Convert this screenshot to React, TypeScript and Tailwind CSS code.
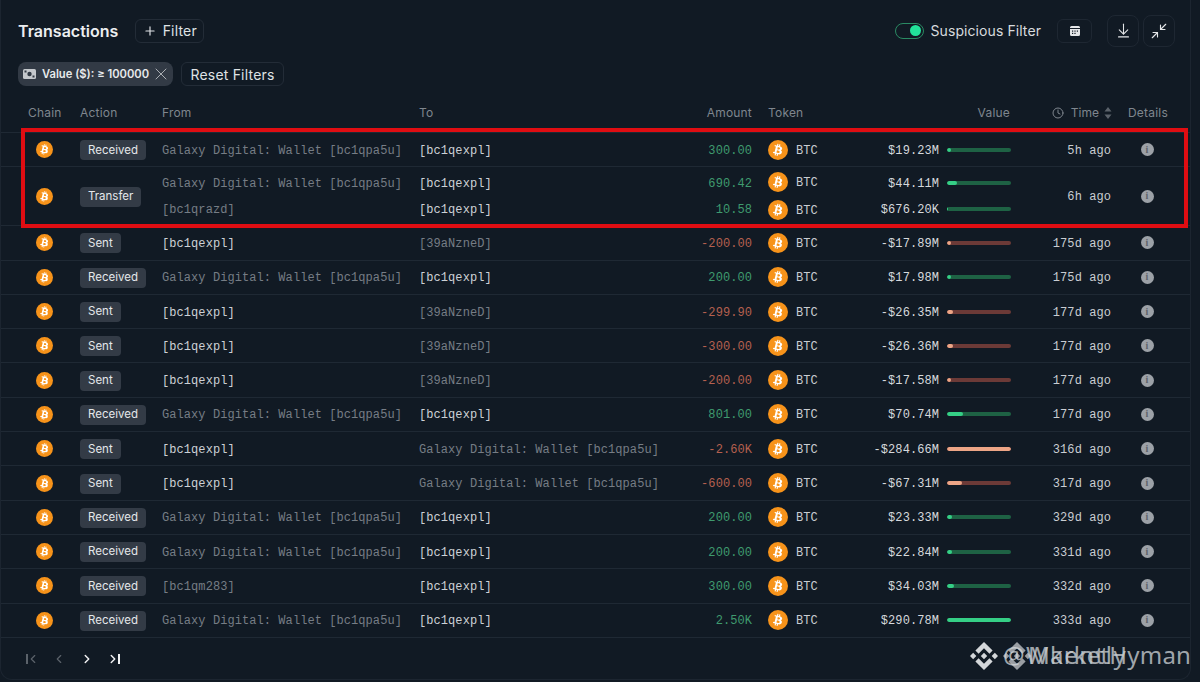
import React from 'react';
import { Plus, X, ArrowDownToLine, Minimize2, Clock, ChevronLeft, ChevronRight } from 'lucide-react';

const MONO = "font-['Liberation_Mono',monospace] tracking-[0.07px]";
const GALAXY = 'Galaxy Digital: Wallet [bc1qpa5u]';
const ME = '[bc1qexpl]';
const MAX_VALUE = 290.78;

interface Line {
  from: string;
  to: string;
  amount: string;
  value: string;
  fill: number;
}

interface Tx {
  action: string;
  time: string;
  lines: Line[];
}

const rows: Tx[] = [
  { action: 'Received', time: '5h ago', lines: [{ from: GALAXY, to: ME, amount: '300.00', value: '$19.23M', fill: 19.23 }] },
  {
    action: 'Transfer',
    time: '6h ago',
    lines: [
      { from: GALAXY, to: ME, amount: '690.42', value: '$44.11M', fill: 44.11 },
      { from: '[bc1qrazd]', to: ME, amount: '10.58', value: '$676.20K', fill: 0.68 },
    ],
  },
  { action: 'Sent', time: '175d ago', lines: [{ from: ME, to: '[39aNzneD]', amount: '-200.00', value: '-$17.89M', fill: 17.89 }] },
  { action: 'Received', time: '175d ago', lines: [{ from: GALAXY, to: ME, amount: '200.00', value: '$17.98M', fill: 17.98 }] },
  { action: 'Sent', time: '177d ago', lines: [{ from: ME, to: '[39aNzneD]', amount: '-299.90', value: '-$26.35M', fill: 26.35 }] },
  { action: 'Sent', time: '177d ago', lines: [{ from: ME, to: '[39aNzneD]', amount: '-300.00', value: '-$26.36M', fill: 26.36 }] },
  { action: 'Sent', time: '177d ago', lines: [{ from: ME, to: '[39aNzneD]', amount: '-200.00', value: '-$17.58M', fill: 17.58 }] },
  { action: 'Received', time: '177d ago', lines: [{ from: GALAXY, to: ME, amount: '801.00', value: '$70.74M', fill: 70.74 }] },
  { action: 'Sent', time: '316d ago', lines: [{ from: ME, to: GALAXY, amount: '-2.60K', value: '-$284.66M', fill: 290.78 }] },
  { action: 'Sent', time: '317d ago', lines: [{ from: ME, to: GALAXY, amount: '-600.00', value: '-$67.31M', fill: 67.31 }] },
  { action: 'Received', time: '329d ago', lines: [{ from: GALAXY, to: ME, amount: '200.00', value: '$23.33M', fill: 23.33 }] },
  { action: 'Received', time: '331d ago', lines: [{ from: GALAXY, to: ME, amount: '200.00', value: '$22.84M', fill: 22.84 }] },
  { action: 'Received', time: '332d ago', lines: [{ from: '[bc1qm283]', to: ME, amount: '300.00', value: '$34.03M', fill: 34.03 }] },
  { action: 'Received', time: '333d ago', lines: [{ from: GALAXY, to: ME, amount: '2.50K', value: '$290.78M', fill: 290.78 }] },
];

const addressColor = (addr: string) => (addr === ME ? 'text-[#cdd1d6]' : 'text-[#767d85]');

const BtcIcon = ({ size = 16 }: { size?: number }) => (
  <svg width={size} height={size} viewBox="0 0 32 32" className="shrink-0">
    <circle cx="16" cy="16" r="16" fill="#F7931A" />
    <path
      fill="#fff"
      d="M22.6 14c.3-2.1-1.3-3.2-3.4-4l.7-2.8-1.7-.4-.7 2.7-1.4-.3.7-2.7-1.7-.4-.7 2.8-1.1-.3-2.4-.6-.4 1.8s1.3.3 1.2.3c.7.2.8.6.8 1l-.8 3.1-1.1 4.4c-.1.2-.3.5-.8.4l-1.2-.3-.8 2 2.2.6 1.2.3-.7 2.8 1.7.4.7-2.8 1.4.4-.7 2.8 1.7.4.7-2.8c2.9.6 5.1.3 6-2.3.7-2.1 0-3.3-1.5-4.1 1.1-.3 1.9-1 2.2-2.5zm-3.9 5.4c-.5 2.1-4 1-5.2.7l.9-3.7c1.2.3 4.8.9 4.3 3zm.5-5.5c-.5 1.9-3.4 1-4.3.7l.8-3.3c1 .2 4 .6 3.5 2.6z"
    />
  </svg>
);

const BinanceMark = () => (
  <svg width="28" height="28" viewBox="0 0 126.61 126.61" fill="#d4d7da" className="shrink-0">
    <path d="M38.73 53.2l24.59-24.58 24.6 24.6 14.3-14.31L63.32 0 24.43 38.9zM0 63.31L14.3 49l14.31 14.31-14.31 14.3zM38.73 73.41L63.32 98l24.6-24.6 14.31 14.29-38.9 38.91-38.91-38.88zM98 63.31L112.3 49l14.31 14.3-14.31 14.32z" />
    <path d="M77.83 63.3L63.32 48.78 52.59 59.51l-1.24 1.23-2.54 2.54 14.51 14.5 14.51-14.47z" />
  </svg>
);

const ValueBar = ({ fill, negative }: { fill: number; negative: boolean }) => {
  const pct = Math.max((fill / MAX_VALUE) * 100, 2);
  return (
    <div className={`h-1 w-16 shrink-0 overflow-hidden rounded-full ${negative ? 'bg-[#6c3a37]' : 'bg-[#1e6244]'}`}>
      <div className={`h-full rounded-full ${negative ? 'bg-[#eda586]' : 'bg-[#35cf86]'}`} style={{ width: `${pct}%` }} />
    </div>
  );
};

const Row = ({ tx }: { tx: Tx }) => {
  const multi = tx.lines.length > 1;
  return (
    <div className={`flex items-center border-b border-[#1f2934] ${multi ? 'h-[59px]' : 'h-[34.3px]'}`}>
      <div className="flex w-[79px] shrink-0 pl-[35px]">
        <BtcIcon size={17} />
      </div>
      <div className="flex w-[82px] shrink-0 pt-[1px]">
        <span className="flex h-5 items-center rounded bg-[#333b46] px-2 text-[11.5px] text-[#e4e7ea]">{tx.action}</span>
      </div>
      <div className={`w-[849px] shrink-0 ${MONO} text-[12px]`}>
        {tx.lines.map((line, i) => (
          <div key={i} className={`flex items-center ${multi ? 'h-[26px]' : ''}`}>
            <div className={`w-[257px] shrink-0 whitespace-nowrap pt-[2px] ${addressColor(line.from)}`}>{line.from}</div>
            <div className={`w-[256px] shrink-0 whitespace-nowrap pt-[2px] ${addressColor(line.to)}`}>{line.to}</div>
            <div className={`w-[77px] shrink-0 pt-[2px] text-right ${line.amount.startsWith('-') ? 'text-[#b5604f]' : 'text-[#3f9a6f]'}`}>{line.amount}</div>
            <div className={`ml-4 flex w-[70px] shrink-0 items-center gap-2 text-[#c9cdd2] ${multi ? (i === 0 ? 'mb-[2px]' : 'mt-[2px]') : ''}`}>
              <BtcIcon size={20} />
              <span className="pt-[2px]">BTC</span>
            </div>
            <div className="w-[101px] shrink-0 whitespace-nowrap pt-[2px] text-right text-[#d6d9dd]">{line.value}</div>
            <div className="ml-2">
              <ValueBar fill={line.fill} negative={line.value.startsWith('-')} />
            </div>
          </div>
        ))}
      </div>
      <div className={`w-[100px] shrink-0 whitespace-nowrap pt-[2px] text-right ${MONO} text-[12px] text-[#c9cdd2]`}>{tx.time}</div>
      <div className="flex w-[72px] shrink-0 justify-center">
        <span className="flex h-[13px] w-[13px] items-center justify-center rounded-full bg-[#9ca1a7] font-['Liberation_Serif',serif] text-[10px] font-bold leading-none text-[#5f646b]">
          i
        </span>
      </div>
    </div>
  );
};

export default function App() {
  return (
    <div className="relative h-[682px] w-[1200px] overflow-hidden bg-[#111a24] font-['Inter',sans-serif]">
      <div className="h-[680px] w-[1191px] rounded-b-xl border border-t-0 border-[#1c2530]">
        {/* toolbar */}
        <div className="flex h-[60px] items-center pl-[17px] pr-[15px] pt-[1px]">
          <h1 className="text-[16px] font-semibold text-[#eceef0]">Transactions</h1>
          <button className="ml-[17px] flex h-[24px] w-[69px] items-center justify-center gap-[6px] rounded-md border border-[#232c37] text-[14px] tracking-[0.2px] text-[#dfe2e5]">
            <Plus size={14} />
            Filter
          </button>
          <div className="ml-auto flex items-center">
            <span className="flex h-4 w-[29px] items-center justify-end rounded-full border border-[#2a8a63] pr-[2px]">
              <span className="h-[11px] w-[11px] rounded-full bg-[#22e39a]" />
            </span>
            <span className="ml-[7px] text-[14px] tracking-[0.08px] text-[#d8dbde]">Suspicious Filter</span>
            <button className="ml-4 flex h-[24px] w-[35px] items-center justify-center rounded-md border border-[#1e2732]">
              <svg width="10" height="10" viewBox="0 0 10 10" fill="#e4e6e8">
                <path d="M1.5 0h7A1.5 1.5 0 0 1 10 1.5V2H0v-.5A1.5 1.5 0 0 1 1.500 0zM0 3h10v5.500A1.500 1.500 0 0 1 8.500 10h-7A1.500 1.500 0 0 1 0 8.500z" />
                <g fill="#111a24">
                  <rect x="2" y="4.500" width="1.200" height="1.200" />
                  <rect x="4.400" y="4.500" width="1.200" height="1.200" />
                  <rect x="6.800" y="4.500" width="1.200" height="1.200" />
                  <rect x="2" y="6.800" width="1.200" height="1.200" />
                  <rect x="4.400" y="6.800" width="1.200" height="1.200" />
                </g>
              </svg>
            </button>
            <button className="ml-[15px] flex h-8 w-8 items-center justify-center rounded-lg border border-[#1e2732] text-[#e4e6e8]">
              <ArrowDownToLine size={17} strokeWidth={1.5} />
            </button>
            <button className="ml-1 flex h-8 w-8 items-center justify-center rounded-lg border border-[#1e2732] text-[#e4e6e8]">
              <Minimize2 size={18} strokeWidth={1.5} />
            </button>
          </div>
        </div>

        {/* active filters */}
        <div className="flex h-7 items-center gap-2 pl-[17px]">
          <span className="flex h-6 w-[155px] items-center gap-[6px] rounded-lg bg-[#323a45] pl-[5px] text-[11.2px] font-semibold text-[#e8eaec]">
            <svg width="13" height="10" viewBox="0 0 13 10" className="shrink-0">
              <rect width="13" height="10" rx="1.500" fill="#c4c8cc" />
              <circle cx="6.500" cy="5" r="2.200" fill="#323a45" />
              <rect x="1.500" y="1.500" width="2" height="2" fill="#323a45" />
              <rect x="9.500" y="6.500" width="2" height="2" fill="#323a45" />
            </svg>
            <span className="whitespace-nowrap">Value ($): ≥ 100000</span>
            <X size={20} strokeWidth={0.9} className="-my-1 -ml-[4px] shrink-0 text-[#d4d7da]" />
          </span>
          <button className="flex h-6 w-[103px] items-center justify-center rounded-md border border-[#232c37] text-[14px] tracking-[0.2px] text-[#dfe2e5]">
            Reset Filters
          </button>
        </div>

        {/* header */}
        <div className="mt-[10px] flex h-[35px] items-center border-b border-[#1f2934] pb-[4px] text-[12px] tracking-[0.2px] text-[#7f868e]">
          <div className="w-[79px] shrink-0 pl-[27px]">Chain</div>
          <div className="w-[82px] shrink-0">Action</div>
          <div className="w-[257px] shrink-0">From</div>
          <div className="w-[256px] shrink-0">To</div>
          <div className="w-[77px] shrink-0 text-right">Amount</div>
          <div className="ml-4 w-[70px] shrink-0">Token</div>
          <div className="w-[172px] shrink-0 text-right">Value</div>
          <div className="flex w-[102px] shrink-0 items-center justify-end">
            <Clock size={12} />
            <span className="ml-[7px] tracking-normal">Time</span>
            <svg width="8" height="12" viewBox="0 0 8 12" fill="#5b626a" className="ml-[5px]">
              <path d="M4 0l3.500 4.500h-7zM4 12L.5 7.500h7z" />
            </svg>
          </div>
          <div className="w-[66px] shrink-0 pl-[16px]">Details</div>
        </div>

        {rows.map((tx, i) => (
          <Row key={i} tx={tx} />
        ))}

        {/* pagination */}
        <div className="flex h-[42px] items-center pl-[16px]">
          <span className="flex w-[28px] items-center justify-center pl-[4px] text-[#5b626a]">
            <span className="h-[10px] w-[1.500px] bg-[#5b626a]" />
            <ChevronLeft size={14} className="-ml-[2px]" />
          </span>
          <span className="flex w-[28px] justify-center">
            <ChevronLeft size={14} className="text-[#5b626a]" />
          </span>
          <span className="flex w-[28px] justify-center">
            <ChevronRight size={14} strokeWidth={2.5} className="text-[#f0f1f2]" />
          </span>
          <span className="flex w-[28px] items-center justify-center pr-[4px] text-[#f0f1f2]">
            <ChevronRight size={14} strokeWidth={2.5} className="-mr-[2px]" />
            <span className="h-[10px] w-[1.500px] bg-[#f0f1f2]" />
          </span>
        </div>
      </div>

      {/* highlight */}
      <div className="pointer-events-none absolute left-[21px] top-[128px] h-[100px] w-[1167px] border-4 border-[#e00d12]" />

      {/* watermarks */}
      <div className="pointer-events-none absolute left-[970px] top-[642px]">
        <BinanceMark />
      </div>
      <div className="pointer-events-none absolute left-[1003px] top-[641px] flex h-7 items-center whitespace-nowrap font-['Noto_Sans',sans-serif] text-[24px] tracking-[1.5px] text-[#c8ccd0]/80">
        @Wkently
      </div>
      <div className="pointer-events-none absolute left-[1003px] top-[642px] opacity-70">
        <BinanceMark />
      </div>
      <div className="pointer-events-none absolute left-[1028px] top-[641px] flex h-7 items-center whitespace-nowrap font-['Noto_Sans',sans-serif] text-[24px] tracking-[0.2px] text-[#c8ccd0]/80">
        MarketHyman
      </div>
    </div>
  );
}
